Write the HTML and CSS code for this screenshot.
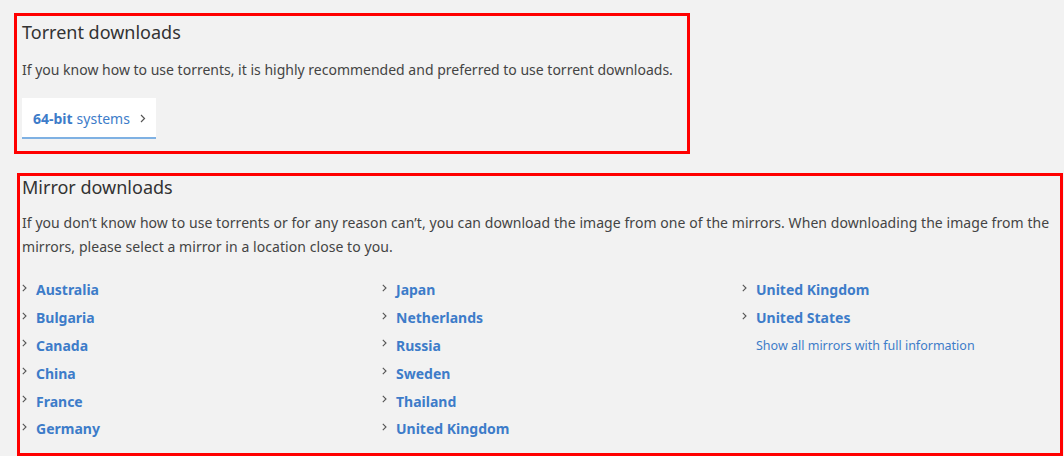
FILE: index.html
```html
<!DOCTYPE html>
<html lang="en">
<head>
<meta charset="utf-8">
<title>Downloads</title>
<link rel="stylesheet" href="styles.css">
</head>
<body>
<section class="box torrent">
  <h2 class="title">Torrent downloads</h2>
  <p class="text">If you know how to use torrents, it is highly recommended and preferred to use torrent downloads.</p>
  <a class="btn" href="#"><b>64-bit</b> systems <svg class="btn-chev" width="6" height="9" viewBox="0 0 6 9"><polyline points="1,1 4.5,4.5 1,8" fill="none" stroke="#555" stroke-width="1.2"/></svg></a>
</section>
<section class="box mirror">
  <h2 class="title">Mirror downloads</h2>
  <p class="text">If you don’t know how to use torrents or for any reason can’t, you can download the image from one of the mirrors. When downloading the image from the mirrors, please select a mirror in a location close to you.</p>
  <div class="cols">
    <ul class="list">
      <li><svg class="chev" width="5" height="8" viewBox="0 0 5 8"><polyline points="0.8,0.8 4,4 0.8,7.2" fill="none" stroke="#555" stroke-width="1.1"/></svg><a href="#">Australia</a></li>
      <li><svg class="chev" width="5" height="8" viewBox="0 0 5 8"><polyline points="0.8,0.8 4,4 0.8,7.2" fill="none" stroke="#555" stroke-width="1.1"/></svg><a href="#">Bulgaria</a></li>
      <li><svg class="chev" width="5" height="8" viewBox="0 0 5 8"><polyline points="0.8,0.8 4,4 0.8,7.2" fill="none" stroke="#555" stroke-width="1.1"/></svg><a href="#">Canada</a></li>
      <li><svg class="chev" width="5" height="8" viewBox="0 0 5 8"><polyline points="0.8,0.8 4,4 0.8,7.2" fill="none" stroke="#555" stroke-width="1.1"/></svg><a href="#">China</a></li>
      <li><svg class="chev" width="5" height="8" viewBox="0 0 5 8"><polyline points="0.8,0.8 4,4 0.8,7.2" fill="none" stroke="#555" stroke-width="1.1"/></svg><a href="#">France</a></li>
      <li><svg class="chev" width="5" height="8" viewBox="0 0 5 8"><polyline points="0.8,0.8 4,4 0.8,7.2" fill="none" stroke="#555" stroke-width="1.1"/></svg><a href="#">Germany</a></li>
    </ul>
    <ul class="list">
      <li><svg class="chev" width="5" height="8" viewBox="0 0 5 8"><polyline points="0.8,0.8 4,4 0.8,7.2" fill="none" stroke="#555" stroke-width="1.1"/></svg><a href="#">Japan</a></li>
      <li><svg class="chev" width="5" height="8" viewBox="0 0 5 8"><polyline points="0.8,0.8 4,4 0.8,7.2" fill="none" stroke="#555" stroke-width="1.1"/></svg><a href="#">Netherlands</a></li>
      <li><svg class="chev" width="5" height="8" viewBox="0 0 5 8"><polyline points="0.8,0.8 4,4 0.8,7.2" fill="none" stroke="#555" stroke-width="1.1"/></svg><a href="#">Russia</a></li>
      <li><svg class="chev" width="5" height="8" viewBox="0 0 5 8"><polyline points="0.8,0.8 4,4 0.8,7.2" fill="none" stroke="#555" stroke-width="1.1"/></svg><a href="#">Sweden</a></li>
      <li><svg class="chev" width="5" height="8" viewBox="0 0 5 8"><polyline points="0.8,0.8 4,4 0.8,7.2" fill="none" stroke="#555" stroke-width="1.1"/></svg><a href="#">Thailand</a></li>
      <li><svg class="chev" width="5" height="8" viewBox="0 0 5 8"><polyline points="0.8,0.8 4,4 0.8,7.2" fill="none" stroke="#555" stroke-width="1.1"/></svg><a href="#">United Kingdom</a></li>
    </ul>
    <ul class="list">
      <li><svg class="chev" width="5" height="8" viewBox="0 0 5 8"><polyline points="0.8,0.8 4,4 0.8,7.2" fill="none" stroke="#555" stroke-width="1.1"/></svg><a href="#">United Kingdom</a></li>
      <li><svg class="chev" width="5" height="8" viewBox="0 0 5 8"><polyline points="0.8,0.8 4,4 0.8,7.2" fill="none" stroke="#555" stroke-width="1.1"/></svg><a href="#">United States</a></li>
      <li class="all"><a href="#">Show all mirrors with full information</a></li>
    </ul>
  </div>
</section>
</body>
</html>
```
FILE: styles.css
```css
html, body {
  margin: 0;
  padding: 0;
}
body {
  background: #f2f2f2;
  font-family: "Noto Sans", "Liberation Sans", sans-serif;
  color: #444;
  width: 1064px;
  height: 456px;
  overflow: hidden;
}
.box {
  border: 3px solid #ff0000;
  box-sizing: border-box;
}
.torrent {
  margin: 13px 0 0 14px;
  width: 676px;
  height: 141px;
  padding: 2px 0 0 5px;
}
.mirror {
  margin: 19px 0 0 17px;
  width: 1046px;
  height: 283px;
  padding: 0 0 0 2px;
}
.title {
  margin: 0;
  font-weight: 400;
  font-size: 18px;
  line-height: 28px;
  color: #333;
}
.mirror .title {
  line-height: 22px;
}
.text {
  margin: 12px 0 0;
  font-size: 14px;
  line-height: 24px;
  color: #444;
}
.mirror .text {
  margin-top: 13px;
  padding-right: 4px;
  letter-spacing: 0.06px;
}
.btn {
  display: inline-flex;
  align-items: center;
  gap: 4px;
  margin-top: 16px;
  box-sizing: border-box;
  width: 134px;
  height: 41px;
  padding: 1px 0 0 11px;
  background: #fff;
  border-bottom: 2px solid #7fb1e3;
  color: #3d7cc9;
  text-decoration: none;
  font-size: 14px;
}
.btn b {
  font-weight: 700;
}
.btn-chev {
  margin-left: 6px;
}
.cols {
  display: grid;
  grid-template-columns: 360px 360px 1fr;
  margin-top: 17px;
}
.list {
  list-style: none;
  margin: 0;
  padding: 0;
}
.list li {
  display: flex;
  align-items: center;
  height: 27.8px;
}
.chev {
  flex: none;
  margin: -4px 9px 0 0;
}
.list a {
  color: #3d7cc9;
  font-weight: 700;
  font-size: 14px;
  text-decoration: none;
}
.list .all {
  padding-left: 14px;
}
.list .all a {
  font-weight: 400;
  font-size: 12.5px;
}
```
